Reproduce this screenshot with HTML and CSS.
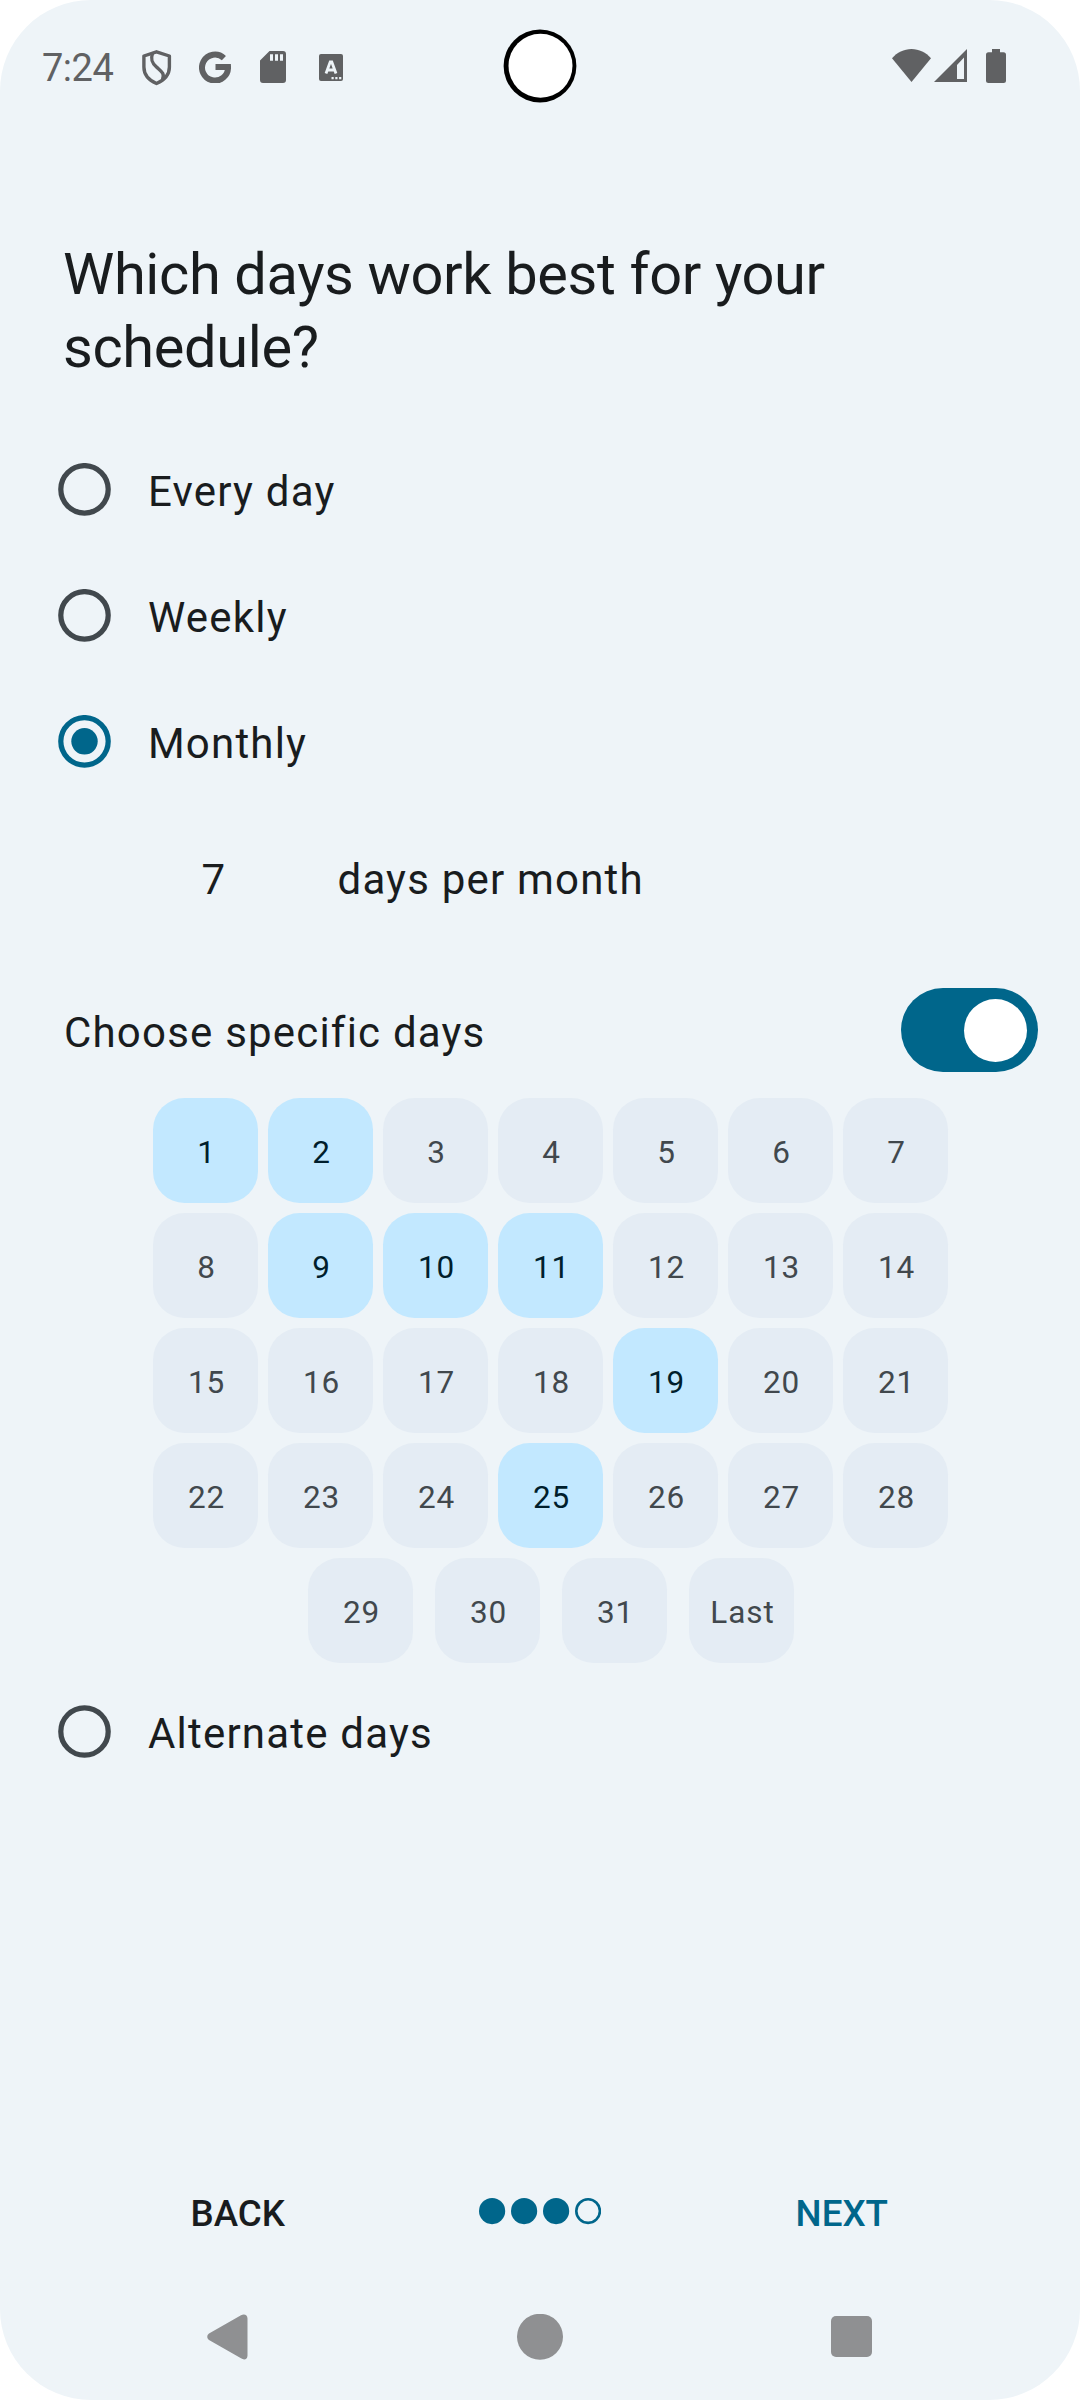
FILE: index.html
```html
<!DOCTYPE html>
<html lang="en">
<head>
<meta charset="utf-8">
<title>Schedule</title>
<link rel="stylesheet" href="styles.css">
</head>
<body>
<div class="screen">
  <header class="status">
    <span class="clock">7:24</span>
    <div class="notifications">
      <svg class="shield" width="30" height="36" viewBox="0 0 30 36" fill="none" stroke="currentColor" stroke-width="3.4" stroke-linejoin="round"><path d="M14.500 1.800 27.400 6V17c0 7-4.800 13-12.900 16.500C6.400 30 1.900 24 1.900 17V6Z"/><path d="M10.500 3.500C8.500 9 9.500 12.500 14.500 17S23 23.500 20.500 29.500"/></svg>
      <svg class="google" width="32" height="32" viewBox="0 0 32 32" fill="none" stroke="currentColor" stroke-width="6"><path d="M24.900 7.100A13 13 0 1 0 29 16H16.500"/></svg>
      <svg class="sdcard" width="26" height="32" viewBox="0 0 26 32" fill="currentColor" fill-rule="evenodd"><path d="M9.500 0H23a3 3 0 0 1 3 3V29a3 3 0 0 1-3 3H3a3 3 0 0 1-3-3V9.500ZM10 3.300V9.700h3V3.300ZM15 3.300V9.700h3V3.300ZM20 3.300V9.700h3V3.300Z"/></svg>
      <svg class="letter" width="24" height="27" viewBox="0 0 24 27"><rect width="24" height="27" rx="2" fill="currentColor"/><path d="M7 19.500 11.200 8h1.600L17 19.500M8.500 16h7" fill="none" stroke="#eef4f8" stroke-width="2.800"/><path d="M12.500 23h2.200v2.200h-2.200zM16.300 23h2.200v2.200h-2.200zM20.100 23h2.200v2.200h-2.200z" fill="#eef4f8"/></svg>
    </div>
    <div class="signals">
      <svg width="39" height="33" viewBox="0 0 39 33" fill="currentColor"><path d="M0 9.200C5 3.500 12 0 19.500 0S34 3.500 39 9.200L19.500 33Z"/></svg>
      <svg class="cell" width="33" height="33" viewBox="0 0 33 33" fill="currentColor" fill-rule="evenodd"><path d="M33 0V33H0ZM30 8.500 23 16V30h7Z"/></svg>
      <svg class="battery" width="20" height="34" viewBox="0 0 20 34" fill="currentColor"><path d="M6 0h8v3.300h3.500A2.500 2.500 0 0 1 20 5.800V31.500a2.500 2.500 0 0 1-2.500 2.500h-15A2.500 2.500 0 0 1 0 31.500V5.800A2.500 2.500 0 0 1 2.500 3.300H6Z"/></svg>
    </div>
    <svg class="camera" width="74" height="74" viewBox="0 0 74 74"><circle cx="37" cy="37" r="36.400"/><circle cx="37.500" cy="36.800" r="32" fill="#fff"/></svg>
  </header>

  <main class="content">
    <h1>Which days work best for your schedule?</h1>

    <div class="option"><svg class="radio" viewBox="0 0 53 53"><circle class="ring" cx="26.500" cy="26.300" r="23.700"/></svg><span class="label">Every day</span></div>
    <div class="option"><svg class="radio" viewBox="0 0 53 53"><circle class="ring" cx="26.500" cy="26.300" r="23.700"/></svg><span class="label">Weekly</span></div>
    <div class="option selected"><svg class="radio" viewBox="0 0 53 53"><circle class="ring" cx="26.500" cy="26.300" r="23.700"/><circle class="dot" cx="26.500" cy="26.300" r="13.200"/></svg><span class="label">Monthly</span></div>

    <div class="frequency"><span class="count">7</span><span>days per month</span></div>

    <div class="specific"><span class="label">Choose specific days</span><span class="switch"><span class="thumb"></span></span></div>

    <div class="days">
      <span class="day on">1</span><span class="day on">2</span><span class="day">3</span><span class="day">4</span><span class="day">5</span><span class="day">6</span><span class="day">7</span>
      <span class="day">8</span><span class="day on">9</span><span class="day on">10</span><span class="day on">11</span><span class="day">12</span><span class="day">13</span><span class="day">14</span>
      <span class="day">15</span><span class="day">16</span><span class="day">17</span><span class="day">18</span><span class="day on">19</span><span class="day">20</span><span class="day">21</span>
      <span class="day">22</span><span class="day">23</span><span class="day">24</span><span class="day on">25</span><span class="day">26</span><span class="day">27</span><span class="day">28</span>
    </div>
    <div class="days-end"><span class="day">29</span><span class="day">30</span><span class="day">31</span><span class="day">Last</span></div>

    <div class="option alternate"><svg class="radio" viewBox="0 0 53 53"><circle class="ring" cx="26.500" cy="26.500" r="23.700"/></svg><span class="label">Alternate days</span></div>
  </main>

  <footer class="pager">
    <span class="action back">BACK</span>
    <svg class="steps" width="122" height="27" viewBox="0 0 122 27"><circle cx="13.100" cy="13.100" r="13.100"/><circle cx="45.100" cy="13.100" r="13.100"/><circle cx="77.100" cy="13.100" r="13.100"/><circle class="todo" cx="109.100" cy="13.100" r="11.800"/></svg>
    <span class="action next">NEXT</span>
  </footer>

  <nav class="system">
    <svg width="42" height="46" viewBox="0 0 42 46"><path d="M34 1.200C37 -.5 40.500 .5 40.500 4.500V41.500C40.500 45.500 37 46.500 34 44.300L2 26C-.3 24.500-.3 21 2 19.500Z"/></svg>
    <svg width="46" height="46" viewBox="0 0 46 46"><circle cx="23" cy="22.800" r="23"/></svg>
    <svg width="41" height="41" viewBox="0 0 41 41"><rect width="41" height="41" rx="5"/></svg>
  </nav>
</div>
</body>
</html>
```
FILE: styles.css
```css
* { box-sizing: border-box; }

body {
  margin: 0;
  background: #fff;
  font-family: Roboto, sans-serif;
  color: #191c1e;
}

svg { display: block; flex: none; }

.screen {
  display: flex;
  flex-direction: column;
  width: 1080px;
  height: 2400px;
  border-radius: 91px;
  overflow: hidden;
  background: #eef4f8;
}

/* Status bar */
.status {
  position: relative;
  display: flex;
  height: 128px;
  color: #606163;
}

.clock {
  width: 100px;
  margin: 46px 0 0 42px;
  font-size: 38px;
  line-height: 45px;
  letter-spacing: -0.5px;
}

.notifications {
  display: flex;
  align-items: flex-start;
}

.shield { margin-top: 50px; }
.google { margin: 51px 0 0 27px; }
.sdcard { margin: 51px 0 0 29px; }
.letter { margin: 53.500px 0 0 33px; }

.signals {
  display: flex;
  margin: 49px 74px 0 auto;
}

.cell { margin-left: 3px; }
.battery { margin-left: 19px; }

.camera {
  position: absolute;
  left: 503px;
  top: 28.500px;
}

/* Form */
.content {
  flex: 1;
  padding: 109.500px 42px 0 63px;
  font-size: 42px;
  line-height: 63px;
  letter-spacing: 1.200px;
}

h1 {
  margin: 0 0 42px;
  font-size: 57.750px;
  font-weight: 400;
  line-height: 73.500px;
  letter-spacing: -0.360px;
}

.option {
  display: flex;
  align-items: center;
  gap: 37px;
  height: 126px;
  margin-left: -5px;
}

.radio { width: 53px; height: 53px; }
.ring { fill: none; stroke: #41484d; stroke-width: 5.250; }
.selected .ring { stroke: #00668b; }
.dot { fill: #00668b; }
.label { margin-top: 4px; }

.frequency {
  display: flex;
  align-items: center;
  height: 150px;
}

.count {
  width: 274.500px;
  padding-left: 138.500px;
}

.specific {
  display: flex;
  justify-content: space-between;
  align-items: center;
  height: 84px;
  margin: 33.500px 0 26px;
  padding-left: 1px;
}

.switch {
  display: flex;
  align-items: center;
  justify-content: flex-end;
  width: 137px;
  height: 84px;
  padding-right: 11px;
  border-radius: 42px;
  background: #00668b;
}

.thumb {
  width: 63px;
  height: 63px;
  border-radius: 50%;
  background: #fff;
}

.days {
  display: grid;
  grid-template-columns: repeat(7, 105px);
  gap: 10px;
  margin-left: 90px;
}

.days-end {
  display: flex;
  gap: 22px;
  margin: 10px 0 5.500px 245px;
}

.day {
  display: flex;
  align-items: center;
  justify-content: center;
  width: 105px;
  height: 105px;
  padding: 4px 0 0 2px;
  border-radius: 31.500px;
  background: #e4ecf4;
  color: #41484d;
  font-size: 31.500px;
  line-height: 42px;
  letter-spacing: 0.900px;
}

.on {
  background: #c2e8ff;
  color: #001e2c;
}

/* Wizard navigation */
.pager {
  display: flex;
  align-items: center;
  justify-content: space-between;
  height: 100px;
  margin-bottom: 26px;
  padding: 0 192px 0 190.500px;
}

.action {
  margin-top: 5px;
  font-size: 36.750px;
  font-weight: 500;
  line-height: 52px;
}

.next { color: #00668b; }
.steps { fill: #00668b; }
.todo { fill: none; stroke: #00668b; stroke-width: 2.600; }

/* System bar */
.system {
  display: flex;
  align-items: center;
  justify-content: space-between;
  height: 113px;
  padding: 0 208px 14px 207px;
  fill: #8f9092;
}
```
